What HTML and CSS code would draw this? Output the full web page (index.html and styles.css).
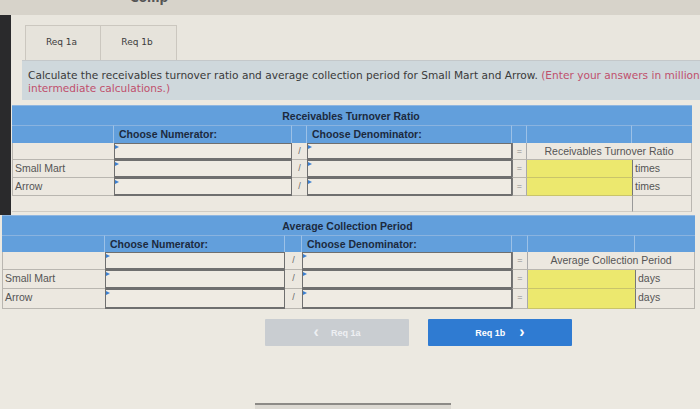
FILE: index.html
```html
<!DOCTYPE html>
<html>
<head>
<meta charset="utf-8">
<link rel="stylesheet" href="styles.css">
</head>
<body>
<div class="top">
  <div class="strip"></div>
  <div class="topmain">
    <div class="band"><span class="bandtext">Comp  ·  ·  ·  ·  ·  ·  ·  ·  ·</span></div>
    <div class="tabs">
      <div class="tab">Req 1a</div>
      <div class="tab">Req 1b</div>
    </div>
    <div class="instr">Calculate the receivables turnover ratio and average collection period for Small Mart and Arrow. <span class="red">(Enter your answers in millions rounded to 1 decimal place. Do not round</span><br><span class="red">intermediate calculations.)</span></div>
    <div class="grid g1">
      <div class="h1 span-all">Receivables Turnover Ratio</div>
      <div class="h2"></div>
      <div class="h2 txt">Choose Numerator:</div>
      <div class="h2"></div>
      <div class="h2 txt">Choose Denominator:</div>
      <div class="h2"></div>
      <div class="h2"></div>
      <div class="h2 last"></div>

      <div class="lbl"></div>
      <div class="inp"></div>
      <div class="op">/</div>
      <div class="inp"></div>
      <div class="op eq">=</div>
      <div class="rh span2">Receivables Turnover Ratio</div>

      <div class="lbl">Small Mart</div>
      <div class="inp"></div>
      <div class="op">/</div>
      <div class="inp"></div>
      <div class="op eq">=</div>
      <div class="yel"></div>
      <div class="unit">times</div>

      <div class="lbl">Arrow</div>
      <div class="inp"></div>
      <div class="op">/</div>
      <div class="inp"></div>
      <div class="op eq">=</div>
      <div class="yel"></div>
      <div class="unit">times</div>

      <div class="empty span6"></div>
      <div class="empty unitempty"></div>
    </div>
  </div>
</div>

<div class="grid g2">
  <div class="h1 span-all">Average Collection Period</div>
  <div class="h2"></div>
  <div class="h2 txt">Choose Numerator:</div>
  <div class="h2"></div>
  <div class="h2 txt">Choose Denominator:</div>
  <div class="h2"></div>
  <div class="h2"></div>
  <div class="h2 last"></div>

  <div class="lbl"></div>
  <div class="inp"></div>
  <div class="op">/</div>
  <div class="inp"></div>
  <div class="op eq">=</div>
  <div class="rh span2">Average Collection Period</div>

  <div class="lbl">Small Mart</div>
  <div class="inp"></div>
  <div class="op">/</div>
  <div class="inp"></div>
  <div class="op eq">=</div>
  <div class="yel"></div>
  <div class="unit">days</div>

  <div class="lbl">Arrow</div>
  <div class="inp"></div>
  <div class="op">/</div>
  <div class="inp"></div>
  <div class="op eq">=</div>
  <div class="yel"></div>
  <div class="unit">days</div>
</div>

<div class="nav">
  <div class="btn prev"><span class="chev">&lsaquo;</span>Req 1a</div>
  <div class="btn next">Req 1b<span class="chev r">&rsaquo;</span></div>
</div>
<div class="bottom"><div class="bar"></div></div>
</body>
</html>
```
FILE: styles.css
```css
* { box-sizing: border-box; }
html, body { margin: 0; padding: 0; }
body {
  width: 700px;
  height: 409px;
  overflow: hidden;
  background: #ece9e1;
  font-family: "Liberation Sans", Arial, sans-serif;
  color: #444;
}
.top { display: flex; }
.strip { width: 11px; background: #2a2a2c; flex: none; }
.topmain { flex: 1; display: flex; flex-direction: column; min-width: 0; }
.band {
  height: 15px;
  background: #d7d3ca;
  overflow: hidden;
  margin-left: -11px;
  padding-left: 130px;
}
.bandtext {
  display: block;
  margin-top: -9px;
  font-family: "DejaVu Sans", sans-serif;
  font-size: 12px;
  font-weight: bold;
  color: #555;
}
.tabs {
  height: 45px;
  background: #e9e6de;
  display: flex;
  align-items: flex-end;
  padding-left: 14px;
}
.tab {
  width: 76px;
  height: 35px;
  border: 1px solid #cbc7bf;
  border-bottom: none;
  background: #e6e3db;
  font-family: "DejaVu Sans", sans-serif;
  font-size: 9px;
  color: #3c3c3c;
  display: flex;
  align-items: center;
  justify-content: center;
  padding: 0 3px 2px 0;
}
.tab + .tab { border-left: none; }
.instr {
  margin-left: 11px;
  height: 40px;
  background: #cfd8dc;
  border-top: 1px solid #c4c8ca;
  padding: 8px 0 0 6px;
  font-family: "DejaVu Sans", sans-serif;
  font-size: 10.6px;
  line-height: 13px;
  color: #3a3a3a;
  white-space: nowrap;
  overflow: hidden;
}
.red { color: #c0506c; }

.grid {
  display: grid;
  font-size: 10.5px;
}
.g1 {
  margin: 5px 10px 3px 1px;
  grid-template-columns: 102px 178px 15px 205px 15px 105px 60px;
  grid-template-rows: 20px 18px 17px 18px 18px 16px;
}
.g2 {
  margin: 0 5px 0 2px;
  grid-template-columns: 103px 180px 17px 210px 16px 107px 60px;
  grid-template-rows: 20px 17px 18px 19px 20px;
}
.span-all { grid-column: 1 / -1; }
.span2 { grid-column: span 2; }
.span6 { grid-column: span 6; }
.h1 {
  background: #629fdc;
  color: #1c2a3e;
  font-weight: bold;
  text-align: center;
  line-height: 20px;
  padding-right: 2px;
  border-top: 1px solid #8fb6e0;
}
.h2 {
  background: #629fdc;
  border-right: 1px solid #9cc1e7;
  border-top: 1px solid #8ab3df;
  color: #1c2a3e;
  font-weight: bold;
  line-height: 17px;
}
.h2.last { border-right: none; }
.h2.txt { padding-left: 5px; }
.lbl {
  background: #ece8e0;
  border-bottom: 1px solid #b9b6b0;
  border-left: 1px solid #b9b6b0;
  padding-left: 2px;
  line-height: 17px;
  color: #555;
}
.inp {
  position: relative;
  background: #efebe3;
  border: 1px solid #6f6f6f;
  border-bottom-width: 2px;
}
.inp::before {
  content: "";
  position: absolute;
  left: 0;
  top: 1px;
  border-left: 4px solid #3b7fd0;
  border-top: 2px solid transparent;
  border-bottom: 2px solid transparent;
}
.op {
  background: #ece8e0;
  border-bottom: 1px solid #b9b6b0;
  text-align: center;
  line-height: 17px;
  font-size: 9px;
  color: #666;
}
.op.eq { color: #8a8a8a; border-left: 1px solid #777; border-right: 1px solid #aaa; }
.rh {
  background: #ece8e0;
  border-bottom: 1px solid #b9b6b0;
  border-right: 1px solid #b9b6b0;
  text-align: center;
  line-height: 17px;
  color: #555;
}
.yel {
  background: #ece86e;
  border-bottom: 1px solid #c9c46a;
}
.unit {
  background: #ece8e0;
  border-left: 1px solid #777;
  border-bottom: 1px solid #b9b6b0;
  border-right: 1px solid #b9b6b0;
  padding-left: 2px;
  line-height: 17px;
  color: #555;
}
.empty { background: #ece8e0; border-bottom: 1px solid #d0ccc4; }
.unitempty { border-left: 1px solid #999; border-right: 1px solid #b9b6b0; }

.nav {
  display: flex;
  gap: 19px;
  padding-left: 265px;
  margin-top: 10px;
}
.btn {
  width: 144px;
  height: 27px;
  display: flex;
  align-items: center;
  justify-content: center;
  font-size: 9px;
  font-weight: bold;
  border-radius: 1px;
}
.prev { background: #c9cdd1; color: #eef0f3; }
.next { background: #2f7bd2; color: #fff; }
.chev { font-size: 16px; line-height: 1; margin: -2px 12px 0 0; }
.chev.r { margin: -2px 0 0 14px; }
.bottom { padding: 57px 0 0 255px; }
.bar { width: 196px; height: 6px; border-top: 2px solid #8c8a86; background: #dcd9d2; }
```
